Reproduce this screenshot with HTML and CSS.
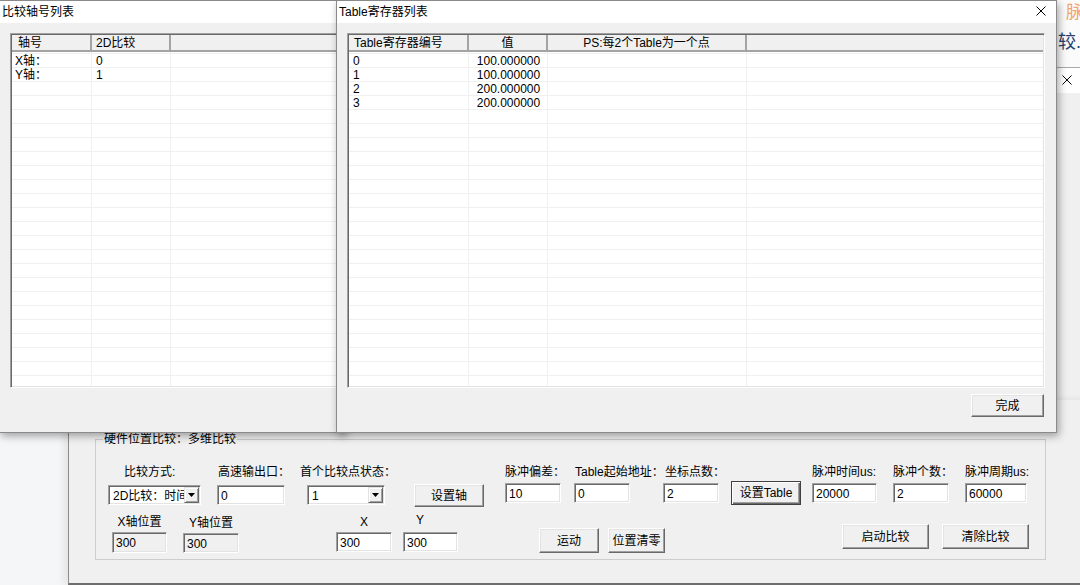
FILE: index.html
```html
<!DOCTYPE html>
<html lang="zh-CN">
<head>
    <meta charset="UTF-8">
    <title>硬件位置比较</title>
    <link rel="stylesheet" href="styles.css">
</head>
<body>
<div class="desktop">

    <!-- window peeking out on the right -->
    <div class="win side-win">
        <div class="side-top">
            <span class="side-a">脉</span>
            <span class="side-b">较.</span>
        </div>
        <div class="side-bar">
            <svg width="10" height="10" viewBox="0 0 10 10"><path d="M0.5 0.5L9.5 9.5M9.5 0.5L0.5 9.5" stroke="#000" stroke-width="1"/></svg>
        </div>
    </div>

    <!-- main window -->
    <div class="win main-win">
        <fieldset class="group">
            <legend>硬件位置比较：多维比较</legend>

            <div class="field-row">
                <div class="field f-mode">
                    <label>比较方式:</label>
                    <div class="combo">
                        <span class="combo-text">2D比较：时间</span>
                        <span class="combo-btn"><svg width="7" height="4" viewBox="0 0 7 4"><path d="M0 0h7L3.5 4z" fill="#000"/></svg></span>
                    </div>
                </div>
                <div class="field f-port">
                    <label>高速输出口：</label>
                    <input class="tb" type="text" value="0">
                </div>
                <div class="field f-state">
                    <label>首个比较点状态：</label>
                    <div class="combo">
                        <span class="combo-text">1</span>
                        <span class="combo-btn"><svg width="7" height="4" viewBox="0 0 7 4"><path d="M0 0h7L3.5 4z" fill="#000"/></svg></span>
                    </div>
                </div>
                <button class="btn btn-axis">设置轴</button>
                <div class="field hi f-offset">
                    <label>脉冲偏差：</label>
                    <input class="tb" type="text" value="10">
                </div>
                <div class="field hi f-start">
                    <label>Table起始地址：</label>
                    <input class="tb" type="text" value="0">
                </div>
                <div class="field hi f-count">
                    <label>坐标点数：</label>
                    <input class="tb" type="text" value="2">
                </div>
                <button class="btn btn-def btn-table">设置Table</button>
                <div class="field hi f-time">
                    <label>脉冲时间us:</label>
                    <input class="tb" type="text" value="20000">
                </div>
                <div class="field hi f-num">
                    <label>脉冲个数：</label>
                    <input class="tb" type="text" value="2">
                </div>
                <div class="field hi f-period">
                    <label>脉冲周期us:</label>
                    <input class="tb" type="text" value="60000">
                </div>
            </div>

            <div class="pos-row">
                <div class="pos p-xpos">
                    <label>X轴位置</label>
                    <input class="tb ro" type="text" value="300" readonly>
                </div>
                <div class="pos p-ypos">
                    <label>Y轴位置</label>
                    <input class="tb ro" type="text" value="300" readonly>
                </div>
                <div class="pos p-x">
                    <label>X</label>
                    <input class="tb" type="text" value="300">
                </div>
                <div class="pos p-y">
                    <label>Y</label>
                    <input class="tb" type="text" value="300">
                </div>
                <button class="btn btn-move">运动</button>
                <button class="btn btn-zero">位置清零</button>
                <button class="btn btn-start">启动比较</button>
                <button class="btn btn-clear">清除比较</button>
            </div>
        </fieldset>
    </div>

    <!-- axis list dialog -->
    <div class="dlg dlg-axis">
        <div class="dlg-title">比较轴号列表</div>
        <div class="dlg-body">
            <div class="lv lv-axis">
                <div class="lv-head">
                    <div class="lv-th c-a1">轴号</div>
                    <div class="lv-th c-a2">2D比较</div>
                    <div class="lv-th c-rest"></div>
                </div>
                <div class="lv-body">
                    <div class="lv-row"><span class="c-a1">X轴：</span><span class="c-a2">0</span></div>
                    <div class="lv-row"><span class="c-a1">Y轴：</span><span class="c-a2">1</span></div>
                </div>
            </div>
        </div>
    </div>

    <!-- table register dialog -->
    <div class="dlg dlg-table">
        <div class="dlg-title">
            <span>Table寄存器列表</span>
            <span class="dlg-close"><svg width="10" height="10" viewBox="0 0 10 10"><path d="M0.5 0.5L9.5 9.5M9.5 0.5L0.5 9.5" stroke="#000" stroke-width="1"/></svg></span>
        </div>
        <div class="dlg-body">
            <div class="lv lv-table">
                <div class="lv-head">
                    <div class="lv-th c-t1">Table寄存器编号</div>
                    <div class="lv-th c-t2">值</div>
                    <div class="lv-th c-t3">PS:每2个Table为一个点</div>
                    <div class="lv-th c-rest"></div>
                </div>
                <div class="lv-body">
                    <div class="lv-row"><span class="c-t1">0</span><span class="c-t2">100.000000</span></div>
                    <div class="lv-row"><span class="c-t1">1</span><span class="c-t2">100.000000</span></div>
                    <div class="lv-row"><span class="c-t1">2</span><span class="c-t2">200.000000</span></div>
                    <div class="lv-row"><span class="c-t1">3</span><span class="c-t2">200.000000</span></div>
                </div>
            </div>
            <div class="dlg-foot">
                <button class="btn btn-done">完成</button>
            </div>
        </div>
    </div>

</div>
</body>
</html>
```

FILE: styles.css
```css
body {
    margin: 0;
    background: #f5f6f8;
    font-family: "Liberation Sans", "Noto Sans CJK SC", sans-serif;
    font-size: 12px;
    line-height: 14px;
    color: #000;
    overflow: hidden;
}
.desktop {
    position: relative;
    width: 1080px;
    height: 585px;
    overflow: hidden;
}
.win,
.dlg {
    position: absolute;
    box-sizing: border-box;
}

/* window on the far right */
.side-win {
    left: 1056px;
    top: 0;
    width: 40px;
    height: 433px;
    background: #f0f0f0;
    z-index: 1;
}
.side-top {
    height: 68px;
    background: #fbfbfb;
    border-bottom: 1px solid #a9a9a9;
    box-sizing: border-box;
    display: flex;
    flex-direction: column;
}
.side-a {
    margin: 3px 0 0 10px;
    font-size: 17px;
    line-height: 20px;
    color: #f4a36c;
}
.side-b {
    margin: 9px 0 0 2px;
    font-size: 18px;
    line-height: 20px;
    color: #23406e;
}
.side-bar {
    height: 25px;
    background: #fff;
    padding: 7px 0 0 6px;
    box-sizing: border-box;
}
.side-bar svg {
    display: block;
}

/* main window */
.main-win {
    left: 68px;
    top: 400px;
    width: 1100px;
    height: 185px;
    background: #f0f0f0;
    border-left: 1px solid #8c8c8c;
    border-bottom: 2px solid #6e6e6e;
    box-shadow: -4px 0 8px rgba(0, 0, 0, 0.08);
    padding: 32px 0 0 26px;
    z-index: 2;
}
.group {
    box-sizing: border-box;
    width: 951px;
    height: 128px;
    margin: 0;
    padding: 19px 0 0 0;
    min-width: 0;
    border: 1px solid #cdcdcd;
}
.group legend {
    margin-left: 7px;
    padding: 0 1px;
    line-height: 14px;
}
.field-row {
    display: flex;
    align-items: flex-start;
    height: 50px;
}
.field {
    display: flex;
    flex-direction: column;
    flex: none;
}
.field label,
.pos label {
    white-space: nowrap;
    height: 14px;
    line-height: 14px;
    margin-bottom: 6px;
}
.field.hi label {
    margin-bottom: 4px;
}
.f-mode   { margin-left: 12px; width: 93px; }
.f-mode label { padding-left: 16px; }
.f-port   { margin-left: 16px; width: 68px; }
.f-port label { padding-left: 1px; }
.f-state  { margin-left: 22px; width: 78px; }
.f-state label { margin-left: -7px; }
.f-offset { margin-left: 21px; width: 56px; }
.f-start  { margin-left: 13px; width: 56px; }
.f-start label { padding-left: 1px; }
.f-count  { margin-left: 33px; width: 56px; }
.f-count label { padding-left: 2px; }
.f-time   { margin-left: 11px; width: 65px; }
.f-num    { margin-left: 16px; width: 56px; }
.f-period { margin-left: 16px; width: 62px; }

/* text boxes */
.tb {
    box-sizing: border-box;
    width: 100%;
    height: 20px;
    margin: 0;
    padding: 1px 0 0 3px;
    font: inherit;
    color: #000;
    background: #fff;
    border: 1px solid;
    border-color: #a0a0a0 #fff #fff #a0a0a0;
    box-shadow: inset 1px 1px #696969, inset -1px -1px #e3e3e3;
    outline: none;
}
.tb.ro {
    background: #f0f0f0;
}

/* combo boxes */
.combo {
    box-sizing: border-box;
    display: flex;
    height: 20px;
    background: #fff;
    border: 1px solid;
    border-color: #a0a0a0 #fff #fff #a0a0a0;
    box-shadow: inset 1px 1px #696969, inset -1px -1px #e3e3e3;
    padding: 1px 1px 1px 1px;
}
.combo-text {
    flex: 1;
    overflow: hidden;
    white-space: nowrap;
    padding: 2px 0 0 3px;
    line-height: 14px;
}
.combo-btn {
    box-sizing: border-box;
    flex: none;
    width: 15px;
    display: flex;
    align-items: center;
    justify-content: center;
    background: #f0f0f0;
    border: 1px solid;
    border-color: #e3e3e3 #696969 #696969 #e3e3e3;
    box-shadow: inset 1px 1px #fff, inset -1px -1px #a0a0a0;
}
.combo-btn svg {
    display: block;
}

/* push buttons */
.btn {
    box-sizing: border-box;
    flex: none;
    margin: 0;
    padding: 0;
    font: inherit;
    color: #000;
    background: #f0f0f0;
    border: 1px solid;
    border-color: #fff #696969 #696969 #fff;
    box-shadow: inset -1px -1px #a0a0a0, inset 1px 1px #e3e3e3;
    text-align: center;
}
.btn-def {
    border-color: #404040;
    box-shadow: inset 1px 1px #fff, inset -1px -1px #696969, inset -2px -2px #a0a0a0;
}
.btn-axis  { margin: 19px 0 0 29px; width: 70px; height: 23px; }
.btn-table { margin: 16px 0 0 12px; width: 70px; height: 24px; }

/* second row */
.pos-row {
    display: flex;
    align-items: flex-start;
}
.pos {
    display: flex;
    flex-direction: column;
    flex: none;
    text-align: center;
}
.pos label {
    margin-bottom: 3px;
}
.p-xpos { margin-left: 16px; width: 55px; }
.p-xpos .tb { height: 21px; }
.p-ypos { margin: 1px 0 0 16px; width: 56px; }
.p-ypos label { margin-bottom: 3px; }
.p-x { margin-left: 97px; width: 56px; }
.p-y { margin: -2px 0 0 11px; width: 55px; text-align: left; }
.p-y label { padding-left: 13px; margin-bottom: 5px; }
.btn-move  { margin: 13px 0 0 81px; width: 60px; height: 25px; }
.btn-zero  { margin: 13px 0 0 9px; width: 57px; height: 25px; }
.btn-start { margin: 9px 0 0 177px; width: 87px; height: 25px; }
.btn-clear { margin: 9px 0 0 13px; width: 87px; height: 25px; }

/* dialogs */
.dlg {
    top: 0;
    height: 433px;
    background: #f0f0f0;
    border: 1px solid #8a8a8a;
    box-shadow: 2px 3px 8px rgba(0, 0, 0, 0.35);
    display: flex;
    flex-direction: column;
}
.dlg-axis {
    left: -1px;
    width: 346px;
    z-index: 3;
}
.dlg-table {
    left: 336px;
    width: 721px;
    z-index: 4;
}
.dlg-title {
    flex: none;
    height: 22px;
    line-height: 20px;
    background: #fff;
    display: flex;
    align-items: center;
    padding-left: 2px;
}
.dlg-table .dlg-title {
    padding-left: 2px;
    justify-content: space-between;
}
.dlg-close {
    margin: 0 10px 2px 0;
    display: flex;
}
.dlg-body {
    flex: 1;
    padding: 10px 0 0 10px;
}
.dlg-table .dlg-body {
    padding-right: 10px;
}

/* list views */
.lv {
    box-sizing: border-box;
    height: 355px;
    background: #fff;
    border: 1px solid;
    border-color: #a0a0a0 #fff #fff #a0a0a0;
    box-shadow: inset 1px 1px #696969, inset -1px -1px #e3e3e3;
    padding: 1px;
    display: flex;
    flex-direction: column;
    overflow: hidden;
}
.lv-head {
    flex: none;
    display: flex;
    height: 17px;
    background: #f0f0f0;
    border-bottom: 2px solid #a3a3a3;
    box-sizing: border-box;
}
.lv-th {
    box-sizing: border-box;
    flex: none;
    line-height: 16px;
    white-space: nowrap;
    border-right: 2px solid #a3a3a3;
}
.lv-th.c-rest {
    flex: 1;
    border-right: none;
}
.lv-body {
    flex: 1;
    padding-top: 2px;
}
.lv-row {
    display: flex;
    height: 14px;
    line-height: 14px;
}
.lv-row span {
    box-sizing: border-box;
    flex: none;
    white-space: nowrap;
}

.lv-axis .c-a1 { width: 80px; padding-left: 3px; }
.lv-axis .c-a2 { width: 79px; padding-left: 4px; }
.lv-axis .lv-th.c-a1 { padding-left: 6px; }
.lv-axis .lv-body {
    background-image:
        linear-gradient(#f0f0f0, #f0f0f0),
        linear-gradient(#f0f0f0, #f0f0f0),
        repeating-linear-gradient(to bottom, transparent 0 13px, #f0f0f0 13px 14px);
    background-repeat: no-repeat, no-repeat, repeat;
    background-size: 1px 100%, 1px 100%, 100% 14px;
    background-position: 79px 0, 158px 0, 0 2px;
}

.lv-table {
    width: 698px;
}
.lv-table .c-t1 { width: 120px; padding-left: 4px; }
.lv-table .c-t2 { width: 79px; text-align: center; }
.lv-table .c-t3 { width: 199px; text-align: center; }
.lv-table .lv-th.c-t1 { padding-left: 5px; }
.lv-table .lv-body {
    background-image:
        linear-gradient(#f0f0f0, #f0f0f0),
        linear-gradient(#f0f0f0, #f0f0f0),
        linear-gradient(#f0f0f0, #f0f0f0),
        repeating-linear-gradient(to bottom, transparent 0 13px, #f0f0f0 13px 14px);
    background-repeat: no-repeat, no-repeat, no-repeat, repeat;
    background-size: 1px 100%, 1px 100%, 1px 100%, 100% 14px;
    background-position: 119px 0, 198px 0, 397px 0, 0 2px;
}

.dlg-foot {
    display: flex;
    justify-content: flex-end;
    padding: 6px 1px 0 0;
    width: 698px;
    box-sizing: border-box;
}
.btn-done {
    width: 73px;
    height: 23px;
}
```
